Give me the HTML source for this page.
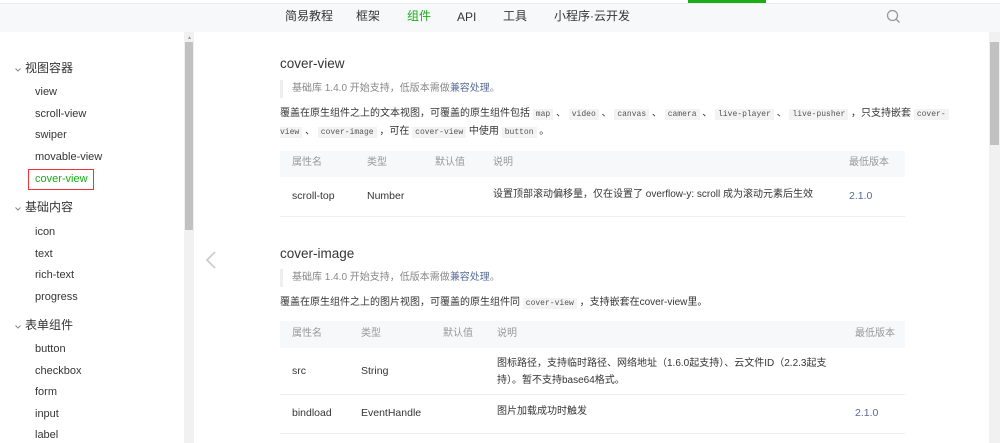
<!DOCTYPE html>
<html><head><meta charset="utf-8"><style>
*{margin:0;padding:0;box-sizing:border-box}
body{width:1000px;height:443px;overflow:hidden;background:#fff;font-family:"Liberation Sans","Noto Sans CJK SC",sans-serif;color:#353535;position:relative}
.a{position:absolute;white-space:nowrap;line-height:1.2}
.top{position:absolute;left:0;top:3px;width:1000px;height:29px;background:#f7f8fa;border-top:1px solid #ececec}
.nav{font-size:12px;color:#353535;top:9px}
.side{font-size:11px;color:#353535}
.grp{font-size:12px;color:#353535}
.code{font-family:"Liberation Mono",monospace;font-size:8px;background:#f3f3f3;padding:1px 3px;color:#555}
.p{font-size:10px;color:#353535}
.th{background:#f7f8fa}
.h{font-size:10px;color:#999}
.c{font-size:10.5px;color:#353535}
.q{border-left:3px solid #eee;font-size:10px;color:#888;padding-left:9px}
.lk{color:#576b95}
.line{position:absolute;height:1px;background:#eee}
.chev{display:inline-block;width:8px;margin-right:3px}
</style></head><body>
<div class="top"></div>
<div class="a" style="left:688px;top:0;width:78px;height:3px;background:#1aad19"></div>
<div class="a nav" style="left:285px">简易教程</div>
<div class="a nav" style="left:356px">框架</div>
<div class="a nav" style="left:407px;color:#1aad19">组件</div>
<div class="a nav" style="left:457px;top:10px">API</div>
<div class="a nav" style="left:503px">工具</div>
<div class="a nav" style="left:554px">小程序·云开发</div>
<svg class="a" style="left:886px;top:9px" width="15" height="15" viewBox="0 0 15 15"><circle cx="6.5" cy="6.5" r="5" fill="none" stroke="#999" stroke-width="1.3"/><path d="M10 10l3.5 3.5" stroke="#999" stroke-width="1.3"/></svg>
<div class="a" style="left:184px;top:32px;width:10px;height:411px;background:#f1f1f1"></div>
<div class="a" style="left:185px;top:42px;width:8px;height:188px;background:#c1c1c1"></div>
<div class="a" style="left:187px;top:35px;font-size:5px;color:#999">▲</div>
<div class="a" style="left:989px;top:32px;width:11px;height:411px;background:#f1f1f1"></div>
<div class="a" style="left:990px;top:42px;width:9px;height:103px;background:#c1c1c1"></div>
<svg class="a" style="left:15px;top:68px" width="6" height="4" viewBox="0 0 6 4"><path d="M.5 .5L3 3l2.5-2.5" fill="none" stroke="#888"/></svg>
<div class="a grp" style="left:25px;top:61px">视图容器</div>
<div class="a side" style="left:35px;top:86px">view</div>
<div class="a side" style="left:35px;top:108px">scroll-view</div>
<div class="a side" style="left:35px;top:129px">swiper</div>
<div class="a side" style="left:35px;top:151px">movable-view</div>
<div class="a" style="left:28px;top:169px;width:66px;height:21px;border:1.5px solid #e33"></div>
<div class="a side" style="left:35px;top:173px;color:#1aad19">cover-view</div>
<svg class="a" style="left:15px;top:207px" width="6" height="4" viewBox="0 0 6 4"><path d="M.5 .5L3 3l2.5-2.5" fill="none" stroke="#888"/></svg>
<div class="a grp" style="left:25px;top:200px">基础内容</div>
<div class="a side" style="left:35px;top:226px">icon</div>
<div class="a side" style="left:35px;top:248px">text</div>
<div class="a side" style="left:35px;top:269px">rich-text</div>
<div class="a side" style="left:35px;top:291px">progress</div>
<svg class="a" style="left:15px;top:325px" width="6" height="4" viewBox="0 0 6 4"><path d="M.5 .5L3 3l2.5-2.5" fill="none" stroke="#888"/></svg>
<div class="a grp" style="left:25px;top:318px">表单组件</div>
<div class="a side" style="left:35px;top:343px">button</div>
<div class="a side" style="left:35px;top:365px">checkbox</div>
<div class="a side" style="left:35px;top:386px">form</div>
<div class="a side" style="left:35px;top:408px">input</div>
<div class="a side" style="left:35px;top:429px">label</div>
<svg class="a" style="left:205px;top:251px" width="12" height="18" viewBox="0 0 12 18"><path d="M10 1L2 9l8 8" fill="none" stroke="#ccc" stroke-width="1.8"/></svg>
<div class="a" style="left:280px;top:56px;font-size:13.5px">cover-view</div>
<div class="a q" style="left:280px;top:80px;height:18px;line-height:18px">基础库 1.4.0 开始支持，低版本需做<span class="lk">兼容处理</span>。</div>
<div class="a p" style="left:280px;top:108px">覆盖在原生组件之上的文本视图，可覆盖的原生组件包括 <span class="code">map</span> 、 <span class="code">video</span> 、 <span class="code">canvas</span> 、 <span class="code">camera</span> 、 <span class="code">live-player</span> 、 <span class="code">live-pusher</span> ，只支持嵌套 <span class="code">cover-</span></div>
<div class="a p" style="left:280px;top:126px"><span class="code" style="padding-left:0">view</span> 、 <span class="code">cover-image</span> ，可在 <span class="code">cover-view</span> 中使用 <span class="code">button</span> 。</div>
<div class="a th" style="left:280px;top:151px;width:625px;height:26px"></div>
<div class="a h" style="left:292px;top:157px">属性名</div>
<div class="a h" style="left:367px;top:157px">类型</div>
<div class="a h" style="left:435px;top:157px">默认值</div>
<div class="a h" style="left:493px;top:157px">说明</div>
<div class="a h" style="left:849px;top:157px">最低版本</div>
<div class="a c" style="left:292px;top:190px">scroll-top</div>
<div class="a c" style="left:367px;top:190px">Number</div>
<div class="a c" style="left:493px;top:189px;font-size:10px">设置顶部滚动偏移量，仅在设置了 overflow-y: scroll 成为滚动元素后生效</div>
<div class="a c lk" style="left:849px;top:190px">2.1.0</div>
<div class="line" style="left:280px;top:216px;width:625px"></div>
<div class="a" style="left:280px;top:246px;font-size:13.5px">cover-image</div>
<div class="a q" style="left:280px;top:269px;height:18px;line-height:18px">基础库 1.4.0 开始支持，低版本需做<span class="lk">兼容处理</span>。</div>
<div class="a p" style="left:280px;top:297px">覆盖在原生组件之上的图片视图，可覆盖的原生组件同 <span class="code">cover-view</span> ，支持嵌套在cover-view里。</div>
<div class="a th" style="left:280px;top:321px;width:625px;height:27px"></div>
<div class="a h" style="left:292px;top:328px">属性名</div>
<div class="a h" style="left:361px;top:328px">类型</div>
<div class="a h" style="left:443px;top:328px">默认值</div>
<div class="a h" style="left:497px;top:328px">说明</div>
<div class="a h" style="left:855px;top:328px">最低版本</div>
<div class="a c" style="left:292px;top:365px">src</div>
<div class="a c" style="left:361px;top:365px">String</div>
<div class="a c" style="left:497px;top:355px;font-size:10px;line-height:17px;white-space:normal;width:330px">图标路径，支持临时路径、网络地址（1.6.0起支持）、云文件ID（2.2.3起支持）。暂不支持base64格式。</div>
<div class="line" style="left:280px;top:394px;width:625px"></div>
<div class="a c" style="left:292px;top:407px">bindload</div>
<div class="a c" style="left:361px;top:407px">EventHandle</div>
<div class="a c" style="left:497px;top:406px;font-size:10px">图片加载成功时触发</div>
<div class="a c lk" style="left:855px;top:407px">2.1.0</div>
<div class="line" style="left:280px;top:433px;width:625px"></div>
</body></html>
